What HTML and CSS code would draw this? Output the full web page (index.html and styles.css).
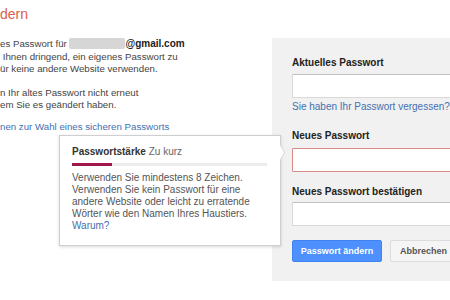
FILE: index.html
```html
<!DOCTYPE html>
<html lang="de">
<head>
<meta charset="utf-8">
<title>Passwort ändern</title>
<link rel="stylesheet" href="styles.css">
</head>
<body>
<div class="page">
  <div class="intro">
    <h1 class="title">dern</h1>
    <p class="text">es Passwort für <span class="redact"></span><b>@gmail.com</b><br>&nbsp;Ihnen dringend, ein eigenes Passwort zu<br>ür keine andere Website verwenden.</p>
    <p class="text">n Ihr altes Passwort nicht erneut<br>em Sie es geändert haben.</p>
    <a class="link" href="#">nen zur Wahl eines sicheren Passworts</a>
  </div>
  <form class="panel">
    <label class="label">Aktuelles Passwort</label>
    <input class="field" type="password">
    <a class="link forgot" href="#">Sie haben Ihr Passwort vergessen?</a>
    <label class="label second">Neues Passwort</label>
    <input class="field error" type="password">
    <label class="label third">Neues Passwort bestätigen</label>
    <input class="field" type="password">
    <div class="actions">
      <button class="btn primary" type="button">Passwort ändern</button>
      <button class="btn" type="button">Abbrechen</button>
    </div>
  </form>
  <div class="tooltip">
    <div class="tip-head"><b>Passwortstärke</b> Zu kurz</div>
    <div class="meter"><div class="meter-fill"></div></div>
    <p class="tip-text">Verwenden Sie mindestens 8 Zeichen.<br>Verwenden Sie kein Passwort für eine<br>andere Website oder leicht zu erratende<br>Wörter wie den Namen Ihres Haustiers.<br><a class="link" href="#">Warum?</a></p>
    <span class="arrow"></span>
  </div>
</div>
</body>
</html>
```

FILE: styles.css
```css
html, body {
  margin: 0;
  padding: 0;
  background: #fff;
  overflow: hidden;
}
body {
  width: 450px;
  height: 300px;
  font-family: "Liberation Sans", Arial, sans-serif;
  font-size: 10px;
  color: #444;
}
.page {
  position: relative;
  display: flex;
  align-items: flex-start;
}
.intro {
  flex: 0 0 272px;
  font-size: 9.7px;
}
.title {
  margin: 6px 0 0;
  font-size: 14px;
  line-height: 16px;
  font-weight: normal;
  color: #d9604c;
}
.text {
  margin: 16px 0 0;
  line-height: 12.5px;
}
.text + .text {
  margin-top: 11px;
}
.text b {
  font-size: 10px;
  color: #222;
}
.redact {
  display: inline-block;
  width: 56px;
  height: 11px;
  vertical-align: -2px;
  background: #d6d6d6;
  border-radius: 2px;
}
.link {
  color: #4470b0;
  text-decoration: none;
}
.intro .link {
  display: block;
  margin-top: 9px;
  line-height: 12.5px;
}
.panel {
  flex: 0 0 220px;
  margin: 38px 0 0;
  padding: 19px 0 19px 20px;
  background: #f1f1f1;
  display: flex;
  flex-direction: column;
  align-items: flex-start;
}
.label {
  font-weight: bold;
  color: #222;
  line-height: 12px;
  margin-bottom: 5px;
}
.label.second {
  margin-top: 17px;
  margin-bottom: 6px;
}
.label.third {
  margin-top: 14px;
  margin-bottom: 4px;
}
.field {
  box-sizing: border-box;
  width: 200px;
  height: 24px;
  margin: 0;
  background: #fff;
  border: 1px solid #d9d9d9;
  border-top-color: #c0c0c0;
  border-radius: 1px;
}
.field.error {
  border-color: #d98a85;
}
.forgot {
  margin-top: 3px;
  line-height: 12px;
}
.actions {
  display: flex;
  gap: 8px;
  margin-top: 14px;
}
.btn {
  box-sizing: border-box;
  height: 22px;
  padding: 0 9px;
  white-space: nowrap;
  font-family: inherit;
  font-size: 9px;
  font-weight: bold;
  color: #555;
  background: #f5f5f5;
  border: 1px solid #dcdcdc;
  border-radius: 2px;
}
.btn.primary {
  width: 90px;
  padding: 0;
  color: #fff;
  background: #4d90fe;
  border-color: #3f84f0;
}
.tooltip {
  position: absolute;
  left: 59px;
  top: 135px;
  box-sizing: border-box;
  width: 222px;
  height: 111px;
  padding: 10px 13px 0 12px;
  background: #fff;
  border: 1px solid #cfcfcf;
  box-shadow: 0 1px 3px rgba(0, 0, 0, 0.15);
}
.tip-head {
  line-height: 12px;
  color: #666;
}
.tip-head b {
  color: #333;
}
.meter {
  height: 3px;
  margin-top: 5px;
  background: #ececec;
}
.meter-fill {
  width: 40px;
  height: 3px;
  background: #a3174a;
}
.tip-text {
  margin: 6px 0 0;
  line-height: 12px;
  color: #555;
}
.arrow {
  position: absolute;
  right: -6px;
  top: 11px;
  width: 10px;
  height: 10px;
  background: #fff;
  border-top: 1px solid #cfcfcf;
  border-right: 1px solid #cfcfcf;
  transform: scaleX(0.6) rotate(45deg);
}
```
